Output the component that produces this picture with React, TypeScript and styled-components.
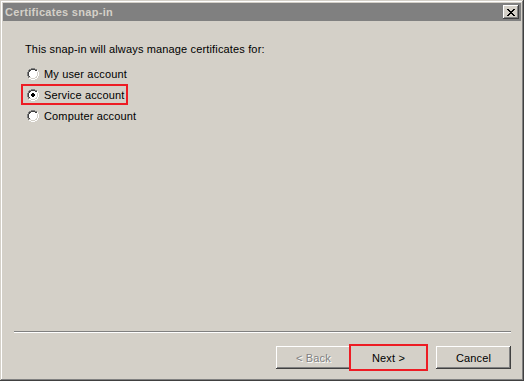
import React from "react";
import styled, { createGlobalStyle, css } from "styled-components";

const COLOR = {
  FACE: "#d4d0c8",
  SHADOW: "#808080",
  DARK: "#404040",
  LIGHT: "#ffffff",
  RED: "#ed1c24",
};

const GlobalStyle = createGlobalStyle`
  html, body {
    margin: 0;
    padding: 0;
    background: ${COLOR.FACE};
  }
  body {
    font-family: "Liberation Sans", Arial, sans-serif;
    font-size: 11px;
    letter-spacing: 0.15px;
    color: #000;
  }
`;

const Window = styled.div`
  box-sizing: border-box;
  width: 524px;
  height: 381px;
  padding: 3px;
  background: ${COLOR.FACE};
  box-shadow: inset -1px -1px ${COLOR.DARK}, inset 1px 1px ${COLOR.FACE},
    inset -2px -2px ${COLOR.SHADOW}, inset 2px 2px ${COLOR.LIGHT};
  display: flex;
  flex-direction: column;
`;

const TitleBar = styled.div`
  height: 18px;
  background: ${COLOR.SHADOW};
  display: flex;
  align-items: center;
  justify-content: space-between;
  padding: 0 2px 0 2px;
`;

const TitleText = styled.span`
  font-weight: bold;
  font-size: 11px;
  color: ${COLOR.FACE};
  letter-spacing: 0.3px;
`;

const CloseButton = styled.div`
  box-sizing: border-box;
  width: 16px;
  height: 14px;
  background: ${COLOR.FACE};
  box-shadow: inset -1px -1px ${COLOR.DARK}, inset 1px 1px ${COLOR.LIGHT},
    inset -2px -2px ${COLOR.SHADOW};
  display: flex;
  align-items: center;
  justify-content: center;
`;

const Body = styled.div`
  flex: 1;
  display: flex;
  flex-direction: column;
  padding: 22px 0 0 22px;
`;

const Prompt = styled.div`
  line-height: 13px;
  margin-bottom: 7px;
`;

const OptionList = styled.div`
  display: flex;
  flex-direction: column;
`;

const Option = styled.label<{ $highlight?: boolean }>`
  box-sizing: border-box;
  display: inline-flex;
  align-self: flex-start;
  align-items: center;
  gap: 5px;
  height: 21px;
  padding: 0 1px 0 4px;
  border: 2px solid ${(p) => (p.$highlight ? COLOR.RED : "transparent")};
  margin-left: -4px;
`;

const Footer = styled.div`
  display: flex;
  flex-direction: column;
  padding: 0 10px 9px 11px;
`;

const Separator = styled.div`
  border-top: 1px solid ${COLOR.SHADOW};
  border-bottom: 1px solid ${COLOR.LIGHT};
  height: 0;
  margin-bottom: 13px;
`;

const ButtonRow = styled.div`
  display: flex;
  justify-content: flex-end;
  align-items: center;
`;

const Button = styled.div<{ $disabled?: boolean; $highlight?: boolean }>`
  box-sizing: border-box;
  width: 75px;
  height: 23px;
  display: flex;
  align-items: center;
  justify-content: center;
  font-size: 11px;
  box-shadow: inset -1px -1px ${COLOR.DARK}, inset 1px 1px ${COLOR.LIGHT},
    inset -2px -2px ${COLOR.SHADOW};
  ${(p) =>
    p.$disabled &&
    css`
      color: ${COLOR.SHADOW};
      text-shadow: 1px 1px 0 ${COLOR.LIGHT};
    `}
  ${(p) =>
    p.$highlight &&
    css`
      box-shadow: none;
      outline: 2px solid ${COLOR.RED};
    `}
`;

const ButtonGap = styled.div`
  width: 10px;
`;

const Radio = ({ checked }: { checked?: boolean }) => (
  <svg width="12" height="12" viewBox="0 0 12 12" shapeRendering="crispEdges">
    <path d="M4 0h4v1H4zM2 1h2v1H2zM8 1h2v1H8zM1 2h1v2H1zM0 4h1v4H0zM1 8h1v2H1z" fill={COLOR.SHADOW} />
    <path d="M10 2h1v2h-1zM11 4h1v4h-1zM10 8h1v2h-1zM8 10h2v1H8zM2 10h2v1H2zM4 11h4v1H4z" fill={COLOR.LIGHT} />
    <path d="M4 1h4v1H4zM2 2h2v1H2zM8 2h2v1H8zM1 4h1v4H1zM2 3h1v1H2zM2 8h1v1H2z" fill={COLOR.DARK} />
    <path d="M9 3h1v1H9zM10 4h1v4h-1zM9 8h1v1H9zM8 9h2v1H8zM2 9h2v1H2zM4 10h4v1H4z" fill={COLOR.FACE} />
    <path d="M4 2h4v1h2v1h-0v4h-1v1H8v1H4V9H3V8H2V4h1V3h1z" fill={COLOR.LIGHT} />
    {checked && <path d="M5 4h2v1h1v2H7v1H5V7H4V5h1z" fill="#000" />}
  </svg>
);

const options = [
  { label: "My user account", checked: false },
  { label: "Service account", checked: true },
  { label: "Computer account", checked: false },
];

export default function App(): JSX.Element {
  return (
    <>
      <GlobalStyle />
      <Window>
        <TitleBar>
          <TitleText>Certificates snap-in</TitleText>
          <CloseButton>
            <svg width="8" height="7" viewBox="0 0 8 7" shapeRendering="crispEdges">
              <path
                d="M0 0h2v1h1v1h2V1h1V0h2v1H7v1H6v1H5v1h1v1h1v1h1v1H6V6H5V5H3v1H2v1H0V6h1V5h1V4h1V3H2V2H1V1H0z"
                fill="#000"
              />
            </svg>
          </CloseButton>
        </TitleBar>
        <Body>
          <Prompt>This snap-in will always manage certificates for:</Prompt>
          <OptionList>
            {options.map((o) => (
              <Option key={o.label} $highlight={o.checked}>
                <Radio checked={o.checked} />
                <span>{o.label}</span>
              </Option>
            ))}
          </OptionList>
        </Body>
        <Footer>
          <Separator />
          <ButtonRow>
            <Button $disabled>&lt; Back</Button>
            <Button $highlight>Next &gt;</Button>
            <ButtonGap />
            <Button>Cancel</Button>
          </ButtonRow>
        </Footer>
      </Window>
    </>
  );
}
